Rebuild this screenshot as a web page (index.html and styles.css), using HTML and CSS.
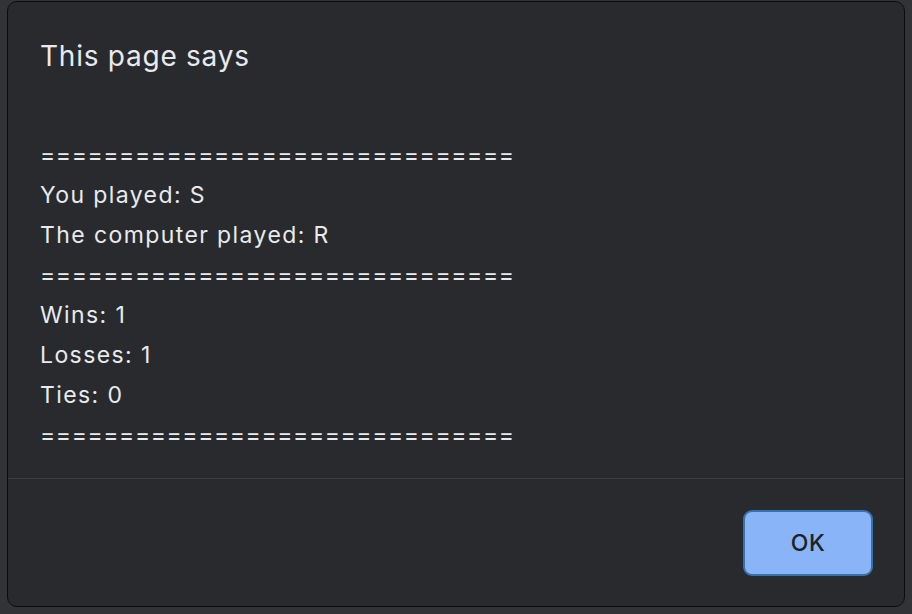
FILE: index.html
```html
<!DOCTYPE html>
<html>
<head>
<meta charset="utf-8">
<link rel="stylesheet" href="styles.css">
</head>
<body>
<div class="dialog">
  <div class="content">
    <div class="title">This page says</div>
    <div class="message">
      <div class="line rule">==============================</div>
      <div class="line">You played: S</div>
      <div class="line">The computer played: R</div>
      <div class="line rule">==============================</div>
      <div class="line">Wins: 1</div>
      <div class="line">Losses: 1</div>
      <div class="line">Ties: 0</div>
      <div class="line rule">==============================</div>
    </div>
  </div>
  <div class="footer">
    <button class="ok">OK</button>
  </div>
</div>
</body>
</html>
```
FILE: styles.css
```css
html, body {
  margin: 0;
  height: 614px;
  background: #323336;
  overflow: hidden;
}
body {
  padding: 1px 7px 7px 7px;
  box-sizing: border-box;
  font-family: Inter, "Noto Sans", sans-serif;
}
.dialog {
  height: 606px;
  box-sizing: border-box;
  border: 1px solid #0c0c0d;
  border-radius: 10px;
  background: #292a2d;
  display: flex;
  flex-direction: column;
}
.content {
  flex: 1;
  padding: 0 32px;
  color: #e8eaed;
}
.title {
  margin-top: 37px;
  font-size: 28px;
  line-height: 34px;
  letter-spacing: 0.75px;
}
.message {
  margin-top: 62px;
  font-size: 23px;
  line-height: 40px;
  letter-spacing: 1.4px;
}
.rule {
  letter-spacing: 0.6px;
}
.footer {
  height: 128px;
  box-sizing: border-box;
  border-top: 1px solid #3c3d41;
  padding: 31px 31px;
  display: flex;
  justify-content: flex-end;
}
.ok {
  width: 130px;
  height: 66px;
  box-sizing: border-box;
  border: 2px solid #3671a9;
  border-radius: 9px;
  background: #8ab4f8;
  color: #202124;
  font-family: Inter, "Noto Sans", sans-serif;
  font-size: 23px;
  font-weight: 500;
  letter-spacing: 0.5px;
}
```
